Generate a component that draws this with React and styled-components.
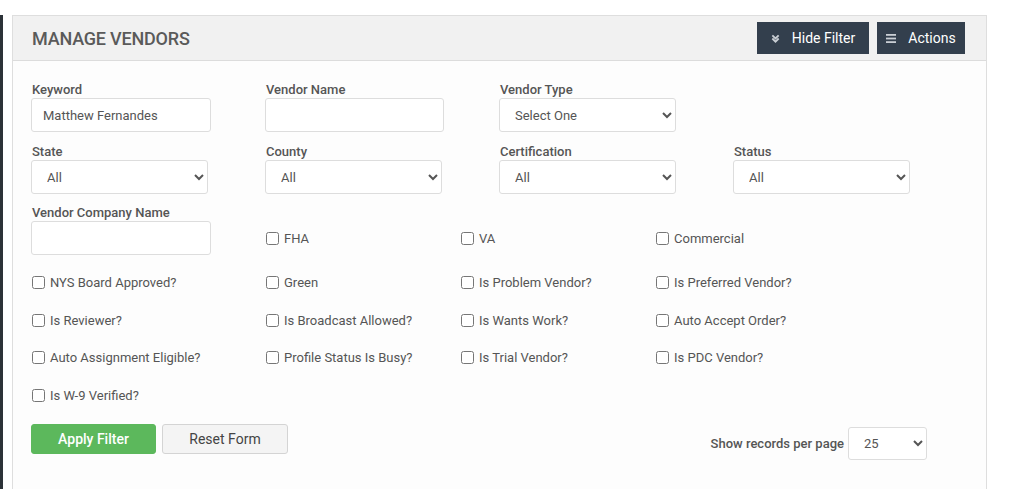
import styled, { createGlobalStyle } from "styled-components";

const GlobalStyle = createGlobalStyle`
  html, body {
    margin: 0;
    background: #ffffff;
    font-family: Roboto, "Liberation Sans", Arial, sans-serif;
    color: #555;
  }
  * { box-sizing: border-box; }
`;

const Page = styled.div`
  display: flex;
  padding-top: 15px;
  height: 489px;
  overflow: hidden;
`;

const Edge = styled.div`
  width: 3px;
  flex: none;
  background: #2c3238;
`;

const Panel = styled.section`
  margin-left: 9px;
  width: 975px;
  border: 1px solid #dedede;
  border-bottom: none;
  background: #fdfdfd;
  min-height: 520px;
`;

const Header = styled.header`
  height: 45px;
  display: flex;
  align-items: center;
  justify-content: space-between;
  padding: 0 21px 0 19px;
  background: #f1f1f1;
  border-bottom: 1px solid #dcdcdc;
`;

const Title = styled.h2`
  margin: 0;
  font-size: 18px;
  font-weight: 500;
  color: #5a5a5a;
  letter-spacing: -0.2px;
`;

const Tools = styled.div`
  display: flex;
  gap: 8px;
`;

const DarkButton = styled.button`
  height: 32px;
  width: ${(p) => p.$w}px;
  display: flex;
  align-items: center;
  justify-content: center;
  gap: 12px;
  border: none;
  border-radius: 0;
  background: #333f4d;
  color: #fff;
  font-family: inherit;
  font-size: 14px;
  padding: 0;
  svg { color: #c9ced4; }
`;

const Body = styled.div`
  padding: 21px 18px 0 18px;
`;

const FieldRow = styled.div`
  display: grid;
  grid-template-columns: repeat(4, 234px);
  margin-bottom: ${(p) => p.$gap}px;
`;

const Field = styled.div`
  display: flex;
  flex-direction: column;
`;

const Label = styled.label`
  font-size: 13px;
  line-height: 16px;
  font-weight: 500;
  color: #555;
  padding-left: 1px;
`;

const TextInput = styled.input`
  width: ${(p) => p.$w || 180}px;
  height: 34px;
  border: 1px solid #dddddd;
  border-radius: 3px;
  background: #fff;
  padding: 0 11px;
  font-family: inherit;
  font-size: 13px;
  color: #555;
  outline: none;
`;

const Select = styled.select`
  width: ${(p) => p.$w || 177}px;
  height: 34px;
  border: 1px solid #dddddd;
  border-radius: 3px;
  background: #fff;
  padding: 0 10px 0 11px;
  font-family: inherit;
  font-size: 13px;
  color: #555;
  outline: none;
`;

const CheckGrid = styled.div`
  display: grid;
  grid-template-columns: 234px 195px 195px 195px;
  row-gap: 17.5px;
  align-items: end;
`;

const CheckCell = styled.label`
  display: flex;
  align-items: center;
  gap: 5px;
  height: ${(p) => (p.$tall ? 34 : 20)}px;
  font-size: 13px;
  color: #555;
  white-space: nowrap;

  input {
    margin: 0 0 0 1px;
    width: 13px;
    height: 13px;
  }
`;

const Footer = styled.div`
  display: flex;
  align-items: flex-start;
  margin-top: 19px;
  padding-right: 41px;
`;

const Buttons = styled.div`
  display: flex;
  gap: 6px;
`;

const FormButton = styled.button`
  height: 30px;
  width: ${(p) => (p.$primary ? 125 : 126)}px;
  border-radius: 3px;
  font-family: inherit;
  font-size: 14px;
  font-weight: ${(p) => (p.$primary ? 500 : 400)};
  color: ${(p) => (p.$primary ? "#fff" : "#444")};
  background: ${(p) => (p.$primary ? "#5cb85c" : "#f4f4f4")};
  border: 1px solid ${(p) => (p.$primary ? "#5cb85c" : "#d4d4d4")};
`;

const PerPage = styled.div`
  margin-left: auto;
  margin-top: 3px;
  display: flex;
  align-items: center;
  gap: 4px;
  font-size: 13px;
  font-weight: 500;
  color: #555;
`;

const DoubleDown = () => (
  <svg width="9" height="9" viewBox="0 0 10 10" fill="none" stroke="currentColor" strokeWidth="2">
    <path d="M1.5 1.5 L5 5 L8.5 1.5" />
    <path d="M1.5 5 L5 8.5 L8.5 5" />
  </svg>
);

const Bars = () => (
  <svg width="10" height="9" viewBox="0 0 10 9" fill="currentColor">
    <rect x="0" y="0" width="10" height="1.8" />
    <rect x="0" y="3.6" width="10" height="1.8" />
    <rect x="0" y="7.2" width="10" height="1.8" />
  </svg>
);

const checks = [
  "NYS Board Approved?", "Green", "Is Problem Vendor?", "Is Preferred Vendor?",
  "Is Reviewer?", "Is Broadcast Allowed?", "Is Wants Work?", "Auto Accept Order?",
  "Auto Assignment Eligible?", "Profile Status Is Busy?", "Is Trial Vendor?", "Is PDC Vendor?",
  "Is W-9 Verified?",
];

const App = () => {
  return (
    <>
      <GlobalStyle />
      <Page>
        <Edge />
        <Panel>
          <Header>
            <Title>MANAGE VENDORS</Title>
            <Tools>
              <DarkButton $w={112}><DoubleDown />Hide Filter</DarkButton>
              <DarkButton $w={88}><span style={{ display: "flex", color: "#fff" }}><Bars /></span>Actions</DarkButton>
            </Tools>
          </Header>
          <Body>
            <FieldRow $gap={12}>
              <Field>
                <Label>Keyword</Label>
                <TextInput defaultValue="Matthew Fernandes" />
              </Field>
              <Field>
                <Label>Vendor Name</Label>
                <TextInput $w={179} />
              </Field>
              <Field>
                <Label>Vendor Type</Label>
                <Select defaultValue="Select One"><option>Select One</option></Select>
              </Field>
            </FieldRow>
            <FieldRow $gap={11}>
              {["State", "County", "Certification", "Status"].map((name) => (
                <Field key={name}>
                  <Label>{name}</Label>
                  <Select><option>All</option></Select>
                </Field>
              ))}
            </FieldRow>
            <CheckGrid>
              <Field>
                <Label>Vendor Company Name</Label>
                <TextInput />
              </Field>
              {["FHA", "VA", "Commercial"].map((name) => (
                <CheckCell key={name} $tall>
                  <input type="checkbox" />{name}
                </CheckCell>
              ))}
              {checks.map((name) => (
                <CheckCell key={name}>
                  <input type="checkbox" />{name}
                </CheckCell>
              ))}
            </CheckGrid>
            <Footer>
              <Buttons>
                <FormButton $primary>Apply Filter</FormButton>
                <FormButton>Reset Form</FormButton>
              </Buttons>
              <PerPage>
                Show records per page
                <Select $w={79} style={{ height: 33 }}><option>25</option></Select>
              </PerPage>
            </Footer>
          </Body>
        </Panel>
      </Page>
    </>
  );
};

export default App;
